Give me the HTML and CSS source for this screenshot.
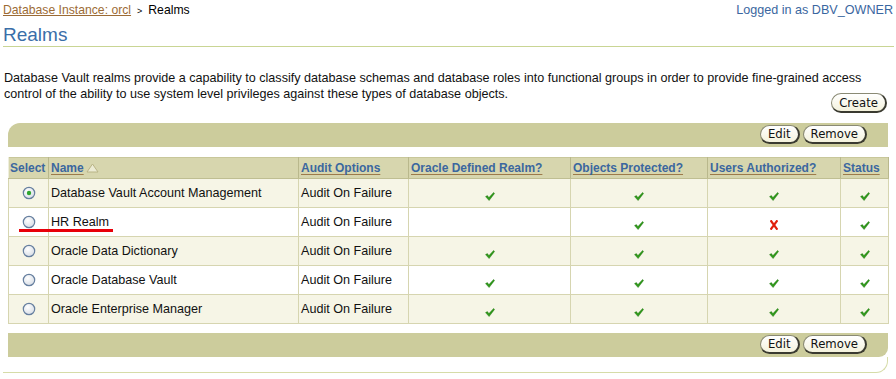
FILE: index.html
```html
<!DOCTYPE html>
<html>
<head>
<meta charset="utf-8">
<link rel="stylesheet" href="styles.css">
</head>
<body>
<div class="page">
  <div class="topline">
    <div class="crumbs"><a class="crumb-link" href="#">Database Instance: orcl</a><span class="sep">&gt;</span><span class="crumb-cur">Realms</span></div>
    <div class="login">Logged in as DBV_OWNER</div>
  </div>
  <h1 class="title">Realms</h1>
  <div class="intro">
    <p class="desc">Database Vault realms provide a capability to classify database schemas and database roles into functional groups in order to provide fine-grained access</p>
    <div class="intro-row">
      <p class="desc desc-end">control of the ability to use system level privileges against these types of database objects.</p>
      <span class="btn btn-create">Create</span>
    </div>
  </div>

  <div class="content">
    <div class="bar bar-top"><span class="btn">Edit</span><span class="btn">Remove</span></div>
    <table class="grid">
      <colgroup>
        <col class="c-sel"><col class="c-name"><col class="c-audit"><col class="c-def"><col class="c-obj"><col class="c-usr"><col class="c-stat">
      </colgroup>
      <thead>
        <tr>
          <th class="th-sel">Select</th>
          <th><a href="#">Name</a><svg class="sort" width="13" height="10" viewBox="0 0 13 10"><polygon points="6.5,1 12,9 1,9" fill="#ecebd4" stroke="#b9b486" stroke-width="1"/></svg></th>
          <th><a href="#">Audit Options</a></th>
          <th><a href="#">Oracle Defined Realm?</a></th>
          <th><a href="#">Objects Protected?</a></th>
          <th><a href="#">Users Authorized?</a></th>
          <th><a href="#">Status</a></th>
        </tr>
      </thead>
      <tbody>
        <tr class="alt">
          <td class="sel"><svg class="radio" width="14" height="14" viewBox="0 0 14 14"><defs><radialGradient id="rg1" cx="0.4" cy="0.35" r="0.7"><stop offset="0" stop-color="#ffffff"/><stop offset="1" stop-color="#d5dbe4"/></radialGradient></defs><circle cx="7" cy="7" r="5.7" fill="url(#rg1)" stroke="#667f9f" stroke-width="1.2"/><circle cx="7" cy="7" r="2.2" fill="#2fa52f"/></svg></td>
          <td>Database Vault Account Management</td>
          <td>Audit On Failure</td>
          <td class="ctr"><svg class="ok" width="10" height="9" viewBox="0 0 10 9"><path d="M0.5 4.6 L2.4 3.6 L3.9 5.6 L8.6 0.4 L9.6 1.4 L4.1 8.6 Z" fill="#2f9a1a" stroke="#1f7010" stroke-width="0.4"/></svg></td>
          <td class="ctr"><svg class="ok" width="10" height="9" viewBox="0 0 10 9"><path d="M0.5 4.6 L2.4 3.6 L3.9 5.6 L8.6 0.4 L9.6 1.4 L4.1 8.6 Z" fill="#2f9a1a" stroke="#1f7010" stroke-width="0.4"/></svg></td>
          <td class="ctr"><svg class="ok" width="10" height="9" viewBox="0 0 10 9"><path d="M0.5 4.6 L2.4 3.6 L3.9 5.6 L8.6 0.4 L9.6 1.4 L4.1 8.6 Z" fill="#2f9a1a" stroke="#1f7010" stroke-width="0.4"/></svg></td>
          <td class="ctr"><svg class="ok" width="10" height="9" viewBox="0 0 10 9"><path d="M0.5 4.6 L2.4 3.6 L3.9 5.6 L8.6 0.4 L9.6 1.4 L4.1 8.6 Z" fill="#2f9a1a" stroke="#1f7010" stroke-width="0.4"/></svg></td>
        </tr>
        <tr>
          <td class="sel"><svg class="radio" width="14" height="14" viewBox="0 0 14 14"><defs><radialGradient id="rg2" cx="0.4" cy="0.35" r="0.7"><stop offset="0" stop-color="#ffffff"/><stop offset="1" stop-color="#d5dbe4"/></radialGradient></defs><circle cx="7" cy="7" r="5.7" fill="url(#rg2)" stroke="#667f9f" stroke-width="1.2"/></svg></td>
          <td>HR Realm</td>
          <td>Audit On Failure</td>
          <td class="ctr"></td>
          <td class="ctr"><svg class="ok" width="10" height="9" viewBox="0 0 10 9"><path d="M0.5 4.6 L2.4 3.6 L3.9 5.6 L8.6 0.4 L9.6 1.4 L4.1 8.6 Z" fill="#2f9a1a" stroke="#1f7010" stroke-width="0.4"/></svg></td>
          <td class="ctr"><svg class="bad" width="8" height="10" viewBox="0 0 8 10"><path d="M1.2 1.2 L6.8 8.8 M6.8 1.2 L1.2 8.8" stroke="#e0200c" stroke-width="2.2" stroke-linecap="square"/></svg></td>
          <td class="ctr"><svg class="ok" width="10" height="9" viewBox="0 0 10 9"><path d="M0.5 4.6 L2.4 3.6 L3.9 5.6 L8.6 0.4 L9.6 1.4 L4.1 8.6 Z" fill="#2f9a1a" stroke="#1f7010" stroke-width="0.4"/></svg></td>
        </tr>
        <tr class="alt">
          <td class="sel"><svg class="radio" width="14" height="14" viewBox="0 0 14 14"><defs><radialGradient id="rg3" cx="0.4" cy="0.35" r="0.7"><stop offset="0" stop-color="#ffffff"/><stop offset="1" stop-color="#d5dbe4"/></radialGradient></defs><circle cx="7" cy="7" r="5.7" fill="url(#rg3)" stroke="#667f9f" stroke-width="1.2"/></svg></td>
          <td>Oracle Data Dictionary</td>
          <td>Audit On Failure</td>
          <td class="ctr"><svg class="ok" width="10" height="9" viewBox="0 0 10 9"><path d="M0.5 4.6 L2.4 3.6 L3.9 5.6 L8.6 0.4 L9.6 1.4 L4.1 8.6 Z" fill="#2f9a1a" stroke="#1f7010" stroke-width="0.4"/></svg></td>
          <td class="ctr"><svg class="ok" width="10" height="9" viewBox="0 0 10 9"><path d="M0.5 4.6 L2.4 3.6 L3.9 5.6 L8.6 0.4 L9.6 1.4 L4.1 8.6 Z" fill="#2f9a1a" stroke="#1f7010" stroke-width="0.4"/></svg></td>
          <td class="ctr"><svg class="ok" width="10" height="9" viewBox="0 0 10 9"><path d="M0.5 4.6 L2.4 3.6 L3.9 5.6 L8.6 0.4 L9.6 1.4 L4.1 8.6 Z" fill="#2f9a1a" stroke="#1f7010" stroke-width="0.4"/></svg></td>
          <td class="ctr"><svg class="ok" width="10" height="9" viewBox="0 0 10 9"><path d="M0.5 4.6 L2.4 3.6 L3.9 5.6 L8.6 0.4 L9.6 1.4 L4.1 8.6 Z" fill="#2f9a1a" stroke="#1f7010" stroke-width="0.4"/></svg></td>
        </tr>
        <tr>
          <td class="sel"><svg class="radio" width="14" height="14" viewBox="0 0 14 14"><defs><radialGradient id="rg4" cx="0.4" cy="0.35" r="0.7"><stop offset="0" stop-color="#ffffff"/><stop offset="1" stop-color="#d5dbe4"/></radialGradient></defs><circle cx="7" cy="7" r="5.7" fill="url(#rg4)" stroke="#667f9f" stroke-width="1.2"/></svg></td>
          <td>Oracle Database Vault</td>
          <td>Audit On Failure</td>
          <td class="ctr"><svg class="ok" width="10" height="9" viewBox="0 0 10 9"><path d="M0.5 4.6 L2.4 3.6 L3.9 5.6 L8.6 0.4 L9.6 1.4 L4.1 8.6 Z" fill="#2f9a1a" stroke="#1f7010" stroke-width="0.4"/></svg></td>
          <td class="ctr"><svg class="ok" width="10" height="9" viewBox="0 0 10 9"><path d="M0.5 4.6 L2.4 3.6 L3.9 5.6 L8.6 0.4 L9.6 1.4 L4.1 8.6 Z" fill="#2f9a1a" stroke="#1f7010" stroke-width="0.4"/></svg></td>
          <td class="ctr"><svg class="ok" width="10" height="9" viewBox="0 0 10 9"><path d="M0.5 4.6 L2.4 3.6 L3.9 5.6 L8.6 0.4 L9.6 1.4 L4.1 8.6 Z" fill="#2f9a1a" stroke="#1f7010" stroke-width="0.4"/></svg></td>
          <td class="ctr"><svg class="ok" width="10" height="9" viewBox="0 0 10 9"><path d="M0.5 4.6 L2.4 3.6 L3.9 5.6 L8.6 0.4 L9.6 1.4 L4.1 8.6 Z" fill="#2f9a1a" stroke="#1f7010" stroke-width="0.4"/></svg></td>
        </tr>
        <tr class="alt">
          <td class="sel"><svg class="radio" width="14" height="14" viewBox="0 0 14 14"><defs><radialGradient id="rg5" cx="0.4" cy="0.35" r="0.7"><stop offset="0" stop-color="#ffffff"/><stop offset="1" stop-color="#d5dbe4"/></radialGradient></defs><circle cx="7" cy="7" r="5.7" fill="url(#rg5)" stroke="#667f9f" stroke-width="1.2"/></svg></td>
          <td>Oracle Enterprise Manager</td>
          <td>Audit On Failure</td>
          <td class="ctr"><svg class="ok" width="10" height="9" viewBox="0 0 10 9"><path d="M0.5 4.6 L2.4 3.6 L3.9 5.6 L8.6 0.4 L9.6 1.4 L4.1 8.6 Z" fill="#2f9a1a" stroke="#1f7010" stroke-width="0.4"/></svg></td>
          <td class="ctr"><svg class="ok" width="10" height="9" viewBox="0 0 10 9"><path d="M0.5 4.6 L2.4 3.6 L3.9 5.6 L8.6 0.4 L9.6 1.4 L4.1 8.6 Z" fill="#2f9a1a" stroke="#1f7010" stroke-width="0.4"/></svg></td>
          <td class="ctr"><svg class="ok" width="10" height="9" viewBox="0 0 10 9"><path d="M0.5 4.6 L2.4 3.6 L3.9 5.6 L8.6 0.4 L9.6 1.4 L4.1 8.6 Z" fill="#2f9a1a" stroke="#1f7010" stroke-width="0.4"/></svg></td>
          <td class="ctr"><svg class="ok" width="10" height="9" viewBox="0 0 10 9"><path d="M0.5 4.6 L2.4 3.6 L3.9 5.6 L8.6 0.4 L9.6 1.4 L4.1 8.6 Z" fill="#2f9a1a" stroke="#1f7010" stroke-width="0.4"/></svg></td>
        </tr>
      </tbody>
    </table>
    <div class="bar bar-bottom"><span class="btn">Edit</span><span class="btn">Remove</span></div>
    <div class="mark"></div>
  </div>
  <div class="footer-line"></div>
</div>
</body>
</html>
```

FILE: styles.css
```css
html, body {
  margin: 0;
  padding: 0;
  background: #ffffff;
}
body {
  font-family: "Liberation Sans", Arial, sans-serif;
  font-size: 12px;
  color: #000000;
}
.page {
  width: 896px;
  height: 379px;
  overflow: hidden;
}
.topline {
  display: flex;
  justify-content: space-between;
  align-items: flex-start;
  height: 24px;
  padding: 3px 3px 0 3px;
  box-sizing: border-box;
  line-height: 14px;
  font-size: 12.2px;
}
.crumb-link {
  color: #9c6b35;
  text-decoration: underline;
}
.sep {
  font-size: 9px;
  margin: 0 6px 0 6px;
  color: #000;
}
.crumb-cur {
  color: #000;
}
.login {
  color: #3a66a0;
  font-size: 12.6px;
}
.title {
  margin: 0 2px 0 3px;
  font-size: 19px;
  font-weight: normal;
  line-height: 22px;
  height: 22px;
  color: #3a6ea8;
  border-bottom: 1px solid #c9d594;
}
.intro {
  margin: 23px 0 0 4px;
  width: 883px;
}
.desc {
  margin: 0;
  line-height: 16px;
  font-size: 12.6px;
  color: #111;
}
.intro-row {
  display: flex;
  justify-content: space-between;
  align-items: flex-start;
}
.desc-end {
  flex: none;
}
.btn {
  display: inline-block;
  box-sizing: border-box;
  height: 20px;
  line-height: 17px;
  padding: 0 7px 0 7px;
  font-family: "DejaVu Sans Condensed", "DejaVu Sans", sans-serif;
  font-stretch: condensed;
  font-size: 13px;
  color: #111;
  background: linear-gradient(#ffffff, #f4f2dc);
  border-style: solid;
  border-width: 1px 2px 2px 1px;
  border-color: #8a8a74 #3a3a30 #3a3a30 #8a8a74;
  border-radius: 10px;
}
.btn-create {
  margin-top: 7px;
}
.content {
  position: relative;
  margin: 10px 0 0 8px;
  width: 880px;
}
.bar {
  display: flex;
  justify-content: flex-end;
  align-items: flex-start;
  gap: 3px;
  background: #cccc9c;
  box-sizing: border-box;
  height: 24px;
  padding: 2px 21px 0 0;
}
.bar .btn {
  height: 19px;
  line-height: 16px;
}
.bar-top {
  border-top-left-radius: 12px;
}
.bar-bottom {
  margin-top: 9px;
  height: 24px;
  padding-top: 2px;
  border-bottom-right-radius: 9px;
}
.grid {
  margin-top: 10px;
  width: 880px;
  border-collapse: collapse;
  table-layout: fixed;
  border: 1px solid #c8c79a;
}
.c-sel { width: 40px; }
.c-name { width: 250px; }
.c-audit { width: 110px; }
.c-def { width: 162px; }
.c-obj { width: 137px; }
.c-usr { width: 133px; }
.c-stat { width: 48px; }
.grid th {
  background: #d7d6ae;
  height: 20px;
  padding: 0 0 0 2px;
  text-align: left;
  font-weight: bold;
  font-size: 12px;
  color: #3b679f;
  border-left: 1px solid #eeeedc;
  border-right: 1px solid #b9b88c;
  border-bottom: 1px solid #bfbe92;
  white-space: nowrap;
  vertical-align: middle;
}
.grid th.th-sel {
  padding-left: 1px;
}
.grid th a {
  color: #3b679f;
  text-decoration: underline;
  text-decoration-color: #9c7a4a;
  text-underline-offset: 2px;
}
.grid th .sort {
  vertical-align: -1px;
  margin-left: 2px;
}
.grid td {
  height: 28px;
  padding: 0 0 0 2px;
  border: 1px solid #d6d5b0;
  font-size: 12.6px;
  color: #111;
  vertical-align: middle;
  white-space: nowrap;
  background: #ffffff;
}
.grid tr.alt td {
  background: #f6f5e6;
}
.grid td.sel {
  text-align: center;
  padding: 0;
}
.grid td.ctr {
  text-align: center;
  padding: 0;
}
.radio {
  display: inline-block;
  vertical-align: middle;
}
.ok, .bad {
  display: inline-block;
  vertical-align: -4px;
}
.mark {
  position: absolute;
  left: 11px;
  top: 106px;
  width: 94px;
  height: 3px;
  background: #e8000a;
}
.footer-line {
  margin: 0 0 0 3px;
  width: 885px;
  height: 16px;
  border-bottom: 1px solid #d6dca8;
  border-right: 1px solid #d6dca8;
  border-bottom-right-radius: 12px;
  box-sizing: border-box;
}
```
